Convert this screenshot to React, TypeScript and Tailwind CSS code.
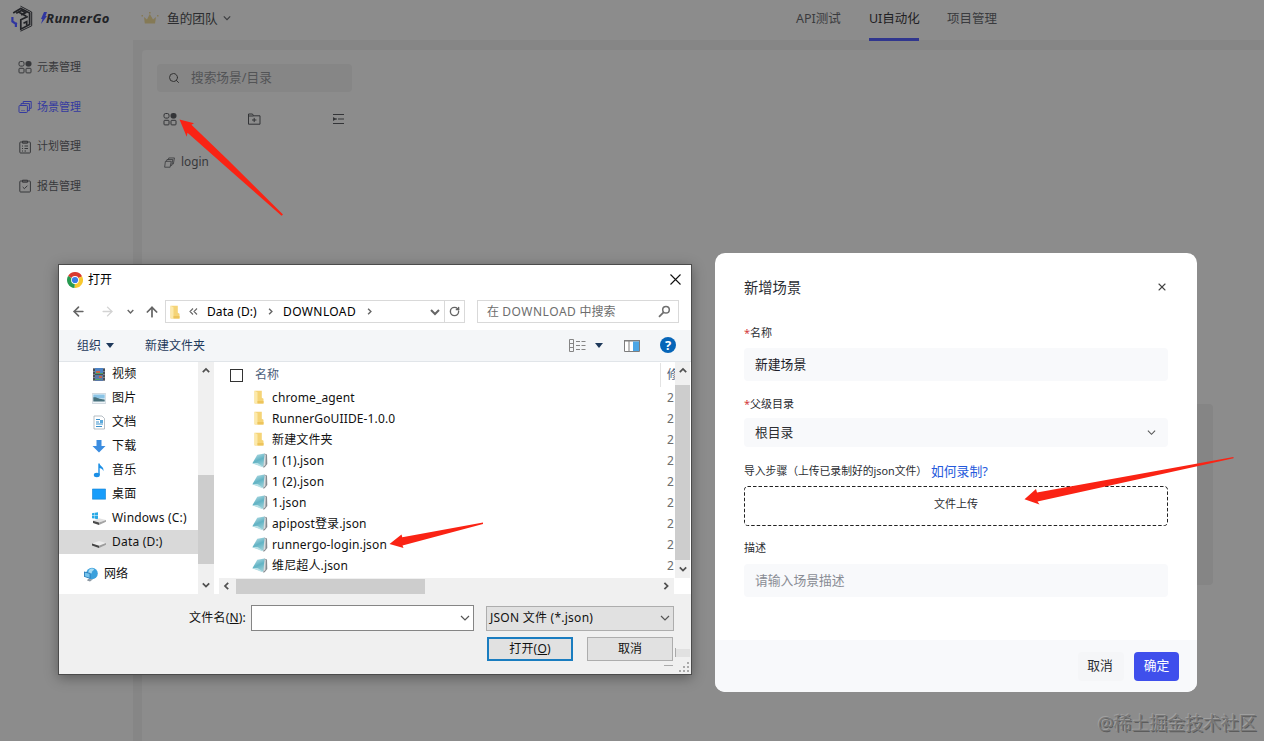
import type { ReactNode } from "react";
import { ArrowLeft, ArrowRight, ArrowUp, RotateCw, Search, X } from "lucide-react";

const sideItems = [
  { label: "元素管理", icon: "grid" },
  { label: "场景管理", icon: "layers", active: true },
  { label: "计划管理", icon: "plan" },
  { label: "报告管理", icon: "report" },
];

const places = [
  { label: "视频", icon: "video" },
  { label: "图片", icon: "picture" },
  { label: "文档", icon: "document" },
  { label: "下载", icon: "download" },
  { label: "音乐", icon: "music" },
  { label: "桌面", icon: "desktop" },
  { label: "Windows (C:)", icon: "windows" },
  { label: "Data (D:)", icon: "drive", active: true },
];

const files = [
  { name: "chrome_agent", folder: true },
  { name: "RunnerGoUIIDE-1.0.0", folder: true },
  { name: "新建文件夹", folder: true },
  { name: "1 (1).json" },
  { name: "1 (2).json" },
  { name: "1.json" },
  { name: "apipost登录.json" },
  { name: "runnergo-login.json" },
  { name: "维尼超人.json" },
];

const chevronPaths = {
  up: "M1 6.5L5 2.5l4 4",
  down: "M1 3l4 4 4-4",
  left: "M6.5 1l-4 4 4 4",
  right: "M3 1l4 4-4 4",
};

function Chevron({ to, className = "h-[10px] w-[10px]", weight = 1.2 }: { to: keyof typeof chevronPaths; className?: string; weight?: number }) {
  return (
    <svg viewBox="0 0 10 10" className={`shrink-0 ${className}`} fill="none" stroke="currentColor" strokeWidth={weight}>
      <path d={chevronPaths[to]} />
    </svg>
  );
}

function LineIcon({ name, className }: { name: string; className?: string }) {
  const paths: Record<string, ReactNode> = {
    grid: (
      <>
        <rect x="1" y="1.5" width="5" height="4.6" rx="1.6" />
        <rect x="8" y="1.5" width="5" height="4.6" rx="1.6" fill="currentColor" />
        <rect x="1" y="8.3" width="5" height="4.6" rx="0.8" />
        <rect x="8" y="8.3" width="5" height="4.6" rx="0.8" />
      </>
    ),
    layers: (
      <>
        <rect x="1" y="5.5" width="8.4" height="7" rx="0.8" />
        <path d="M3 5.5V3.6h8.4v7H9.4M5.2 3.6V1.5h8v6.8h-1.8" />
        <path d="M3 10.5h4" opacity=".5" />
      </>
    ),
    plan: (
      <>
        <rect x="1.8" y="2" width="10.6" height="11" rx="0.8" />
        <path d="M4.5 1.2h5v2h-5zM4 6h1M6.5 6H10M4 8.5h1M6.5 8.5H10M4 11h1M6.5 11H8" />
      </>
    ),
    report: (
      <>
        <rect x="1.8" y="2" width="10.6" height="11" rx="0.8" />
        <path d="M4.5 1.2h5v2h-5zM4.7 8l1.7 1.7 3-3" />
      </>
    ),
    folder: <path d="M1.5 2h4l1 1.8h6.5v8.4H1.5zM1.5 4h5M7.2 5.9v4.2M5 8h4.4" />,
    indent: (
      <>
        <path d="M2 2.5h11M7 7h6M2 11.5h11" />
        <path d="M2 5l3.2 2L2 9z" fill="currentColor" stroke="none" />
        <path d="M4 7h2" />
      </>
    ),
    copy: (
      <>
        <path d="M1.8 5.5h7.4L7.8 13H.8z" />
        <path d="M3.2 5.5l.6-2.3h7.4l-1.4 7.6H8.4M5.6 3.2l.5-2h7.2l-1.4 7.6h-1.7" />
      </>
    ),
  };
  return (
    <svg viewBox="0 0 14 14" className={className} fill="none" stroke="currentColor" strokeWidth="1">
      {paths[name]}
    </svg>
  );
}

function PlaceIcon({ name }: { name: string }) {
  const art: Record<string, ReactNode> = {
    video: (
      <>
        <path fill="#4b4f57" d="M1 1h12v13H1z" />
        <path fill="#4c83c4" d="M3 1h8v6H3z" />
        <path fill="#5a79a8" d="M3 8h8v6H3z" />
        <path fill="#c6664a" d="M4 4h4v2H4zM7 9h3v2H7z" />
        <path fill="#4fa067" d="M3 6h8v1H3zM3 12h6v1H3z" />
        <path stroke="#b9bcc2" strokeDasharray="1 2" d="M2 1v13M12 1v13" />
      </>
    ),
    picture: (
      <>
        <path fill="#eef4f8" stroke="#b7c3cc" strokeWidth=".6" d="M.3 2.5h13.4v10H.3z" />
        <path fill="#8bc4e6" d="M1.3 3.5h11.4v4H1.3z" />
        <path fill="#47717d" d="M1.3 6.5c3-1 5 2 11.4 2v2H1.3z" />
      </>
    ),
    document: (
      <>
        <path fill="#fff" stroke="#9aa3ad" strokeWidth=".7" d="M2 1h8l2.5 2.5V14H2z" />
        <path stroke="#3b91cc" d="M4 4.5h4M4 7h3M4 9h7M4 11.5h6" />
        <path fill="#5aa9dc" d="M8 5h3v3H8z" />
      </>
    ),
    download: <path fill="#3c8de0" d="M4.5 1h5v6h4L7 13.5.5 7h4z" />,
    music: (
      <>
        <ellipse cx="4.8" cy="12" rx="3" ry="2.2" fill="#1b8fe6" />
        <path fill="#1b8fe6" d="M6.3.5h1.4c0 3 4.8 3 3.6 7.8-.4-2-1.8-2.7-3.6-3.2V12H6.3z" />
      </>
    ),
    desktop: <path fill="#189dfb" stroke="#1482d0" strokeWidth=".6" d="M.4 2h13.2v10.2H.4z" />,
    windows: (
      <>
        <path fill="#29a9e6" d="M0 2.2l2.6-.4v2.7H0zM3 1.7l3-.5v3.3H3zM0 5h2.6v2.6L0 7.2zM3 5h3v3.2l-3-.5z" />
        <path fill="#e2e2e2" d="M1 9.8l6-2.6 7 1.8-7 2.5z" />
        <path fill="#4c4c4c" d="M1 9.8l6 1.7V14l-6-2z" />
        <path fill="#a5a5a5" d="M7 11.5L14 9v1.8L7 14z" />
      </>
    ),
    drive: (
      <>
        <path fill="#ececec" d="M0 8.5L7 6l7 2-7 2.7z" />
        <path fill="#454545" d="M0 8.5l7 2.2V13l-7-2.4z" />
        <path fill="#9c9c9c" d="M7 10.7L14 8v1.8L7 13z" />
      </>
    ),
    network: (
      <>
        <circle cx="8" cy="6.5" r="5.8" fill="#3ba0dc" />
        <path fill="#a7dcf4" d="M5 3c2-2 4-1.5 5-1 0 2-3 2-2 4-1 1-3 1-4 0z" />
        <path fill="#287bb8" d="M0 4.5L6.5 6v6L0 9.8z" />
        <path fill="#75c3ec" d="M.8 5.6l4.8 1.1v4L.8 9.2z" />
        <path fill="#8c98a2" d="M4 12l5 .3-3 2.2-3-1z" />
      </>
    ),
  };
  return <svg viewBox="0 0 14 15" className="h-[15px] w-[14px] shrink-0" fill="none">{art[name]}</svg>;
}

function FolderIcon() {
  return (
    <svg viewBox="0 0 10 14" className="h-[14px] w-[10px]">
      <path fill="#f5d477" d="M.5.8h7.3v7l1.7 1v4.7H.5z" />
      <path fill="#fce9ab" d="M.5.8l3 1.5v11.2l-3-.5z" />
      <path fill="#edc45c" d="M3.5 11h6v2.5h-6z" />
    </svg>
  );
}

function FileIcon() {
  return (
    <svg viewBox="0 0 16 15" className="h-[15px] w-4">
      <defs>
        <linearGradient id="page" x1="0" y1="0" x2="0.4" y2="1">
          <stop offset="0" stopColor="#c3e4ea" />
          <stop offset="0.6" stopColor="#62b3c4" />
          <stop offset="1" stopColor="#8fcbd5" />
        </linearGradient>
      </defs>
      <path fill="#85898e" d="M12.2.6l2.8.9.3 9.5-2.6 3.2-1.7.3z" />
      <path fill="#d9dddf" d="M12.3.9l1.5.8-.4 10.3-2.2 2.1z" />
      <path fill="url(#page)" d="M5.3 1.7L12.6.6l-1 9.9-.5 3.2L.4 10.2z" />
      <path fill="#b8e0e6" d="M.4 10.2l5.3-.3 5.4 3.8-.9.5z" />
    </svg>
  );
}

function Logo() {
  return (
    <svg viewBox="0 0 22 27" className="h-[27px] w-[22px]" fill="none" stroke="#222327">
      <path strokeWidth="1" d="M9.5 1.2L20.7 7v13.8L9.5 26.2" />
      <path strokeWidth="1.7" d="M2.2 8l7.6-4.6L18.6 8v11.6l-8.8 4.6V14.8l7-3.4" />
      <path strokeWidth="1.7" d="M5.2 8.2l5.4-2.7 4 2.2-4.4 2.4M8 7.3l7.3 4M12.5 18.2l3.2-1.5v3.5" />
      <path stroke="#3036a0" strokeWidth="2.2" d="M1.4 12v4.5l4.4 3M4.9 17.5v4.5" />
    </svg>
  );
}

function ChromeIcon() {
  return (
    <svg viewBox="0 0 16 16" className="h-4 w-4">
      <path fill="#d93a2f" d="M8 8L1.1 4A8 8 0 0 1 15 4.2z" />
      <path fill="#f8c82e" d="M8 8l7-3.8A8 8 0 0 1 7.5 16z" />
      <path fill="#279a50" d="M8 8l-.5 8A8 8 0 0 1 1.1 4z" />
      <path fill="#d93a2f" d="M8 4.3h7L14.5 4 8 1z" />
      <circle cx="8" cy="8" r="3.9" fill="#fff" />
      <circle cx="8" cy="8" r="3.1" fill="#3a7de8" />
    </svg>
  );
}

function TopBar() {
  return (
    <header className="flex h-10 items-start text-[12.5px] leading-[18px] text-[#3a3b3e]">
      <div className="ml-[11px] mt-[5px]"><Logo /></div>
      <div className="ml-2 mt-[9px] flex w-[70px] items-center text-[#222327]">
        <svg viewBox="0 0 6 12" className="h-3 w-[6px] shrink-0"><path fill="#3036a0" d="M3 0h3L4.5 4H6L0 12l1.5-5H0z" /></svg>
        <span className="-ml-px font-['Noto_Sans'] text-[13px] font-bold italic leading-[18px] tracking-[0.35px]">RunnerGo</span>
      </div>
      <svg viewBox="0 0 18 14" className="ml-[30px] mt-[11px] h-[14px] w-[18px]">
        <path fill="#857a56" d="M3.8 12.5L3 6l3 2.5L8.8 3l3.2 5.5L15 6l-1 6.5z" />
        <path fill="#857a56" d="M.5 4H2v1.5H.5zM8 1h1.6v1.6H8zM16 4h1.5v1.5H16z" />
      </svg>
      <div className="ml-2 mt-[9px] flex items-center gap-[5px]">
        <span className="text-[12.7px] text-[#2b2c2f]">鱼的团队</span>
        <Chevron to="down" className="h-2 w-2" weight={1.4} />
      </div>
      <nav className="ml-auto mr-[267px] flex h-10 pt-[10px]">
        <span className="w-[73px]">API测试</span>
        <span className="relative w-[78px] text-[#1f2023]">
          UI自动化
          <i className="absolute left-0 top-[28px] z-10 h-[3px] w-[50px] bg-[#30368e]" />
        </span>
        <span>项目管理</span>
      </nav>
    </header>
  );
}

function Sidebar() {
  return (
    <aside className="w-[133px] shrink-0 pl-[18px] pt-[17px]">
      {sideItems.map((item) => (
        <div key={item.label} className={`mb-[19.8px] flex h-5 items-center gap-[5px] text-[11px] ${item.active ? "text-[#343aa0]" : "text-[#37383b]"}`}>
          <LineIcon name={item.icon} className="h-[14px] w-[14px]" />
          {item.label}
        </div>
      ))}
    </aside>
  );
}

function ScenePanel() {
  return (
    <main className="ml-[9px] mt-[10px] flex-1 rounded-tl bg-[#8c8c8c] pl-[15px] pt-[14px]">
      <div className="flex h-7 w-[195px] items-center rounded bg-[#868686] pl-[11px] text-[12.7px] text-[#535456]">
        <Search className="mr-[11px] h-3 w-3 text-[#333]" strokeWidth={2} />
        搜索场景/目录
      </div>
      <div className="ml-[6px] mt-5 flex gap-[70px] text-[#333437]">
        <LineIcon name="grid" className="h-[14px] w-[14px]" />
        <LineIcon name="folder" className="h-[14px] w-[14px]" />
        <LineIcon name="indent" className="h-[14px] w-[14px]" />
      </div>
      <div className="ml-[7px] mt-[26px] flex h-5 items-center gap-[6px] font-['Noto_Sans'] text-[11.8px] text-[#37383b]">
        <LineIcon name="copy" className="h-[11px] w-[11px]" />
        login
      </div>
    </main>
  );
}

function AddressRow() {
  return (
    <div className="mt-[5px] flex h-[23px] items-center text-[#656565]">
      <ArrowLeft className="ml-3 h-[15px] w-[15px]" strokeWidth={2.6} />
      <ArrowRight className="ml-[14px] h-[15px] w-[15px] text-[#d3d3d3]" strokeWidth={2.2} />
      <Chevron to="down" className="ml-3 h-[7px] w-[7px]" weight={2} />
      <ArrowUp className="ml-[10px] h-4 w-4" strokeWidth={2.6} />
      <div className="ml-[5px] flex h-[23px] w-[300px] items-center border border-[#d9d9d9]">
        <span className="ml-1 mr-[9px]"><FolderIcon /></span>
        <svg viewBox="0 0 9 7" className="h-[7px] w-[9px]" fill="none" stroke="#666" strokeWidth="1.1"><path d="M4 .5l-3 3 3 3M8 .5l-3 3 3 3" /></svg>
        <span className="ml-[9px] w-[60px] tracking-[0.1px] text-black">Data (D:)</span>
        <Chevron to="right" className="h-[7px] w-[7px]" weight={2} />
        <span className="ml-[9px] w-[83px] tracking-[0.4px] text-black">DOWNLOAD</span>
        <Chevron to="right" className="h-[7px] w-[7px]" weight={2} />
        <Chevron to="down" className="ml-auto mr-1 h-[10px] w-[10px]" weight={2} />
        <div className="flex h-full w-5 items-center justify-center border-l border-[#d9d9d9]">
          <RotateCw className="h-[11px] w-[11px]" strokeWidth={3} />
        </div>
      </div>
      <div className="ml-3 flex h-[23px] w-[202px] items-center justify-between border border-[#d9d9d9] pl-[9px] pr-[7px] text-[#6d6d6d]">
        <span>在 <span className="tracking-[0.55px]">DOWNLOAD</span> 中搜索</span>
        <svg viewBox="0 0 13 13" className="h-[13px] w-[13px]" fill="none" stroke="#6f6f6f">
          <circle cx="8" cy="4.8" r="3.3" strokeWidth="1.5" />
          <path strokeWidth="1.8" d="M5.5 7.3L1 11.8" />
        </svg>
      </div>
    </div>
  );
}

function Toolbar() {
  return (
    <div className="mt-[7px] flex h-8 items-center border-b border-[#e1e5e9] bg-[#f4f6f8] pl-[18px] text-[#1e395b]">
      组织
      <svg viewBox="0 0 8 5" className="ml-[5px] h-[5px] w-2"><path fill="#1e395b" d="M0 0h8L4 5z" /></svg>
      <span className="ml-[31px]">新建文件夹</span>
      <svg viewBox="0 0 17 13" className="ml-auto h-[13px] w-[17px]" fill="none" stroke="#858585">
        <path d="M.5.5h4v12h-4zM.5 4.5h4M.5 8.5h4" />
        <path strokeDasharray="4 1.5" d="M7 2.5h10M7 6.5h10M7 10.5h10" />
      </svg>
      <svg viewBox="0 0 8 5" className="ml-[9px] h-[5px] w-2"><path fill="#1e395b" d="M0 0h8L4 5z" /></svg>
      <svg viewBox="0 0 16 12" className="ml-[21px] h-3 w-4">
        <path fill="#fff" stroke="#7d7d7d" d="M.5.5h15v11H.5z" />
        <path fill="#7d7d7d" d="M0 0h16v1.5H0zM4.5 1h1v10h-1z" />
        <path fill="#4ba6e6" d="M9 1.5h6V11H9z" />
      </svg>
      <span className="mb-px ml-5 mr-[15px] flex h-4 w-4 items-center justify-center rounded-full bg-[#0665b8] text-[13px] font-bold leading-4 text-white">?</span>
    </div>
  );
}

function PlacesPane() {
  return (
    <div className="flex w-[155px] shrink-0">
      <div className="w-[139px]">
        {places.map((place) => (
          <div key={place.label} className={`flex h-6 items-center gap-[6px] pl-[33px] ${place.active ? "bg-[#d9d9d9]" : ""}`}>
            <PlaceIcon name={place.icon} />
            <span className="whitespace-nowrap tracking-[0.2px]">{place.label}</span>
          </div>
        ))}
        <div className="mt-2 flex h-6 items-center gap-[6px] pl-[25px]">
          <PlaceIcon name="network" />
          网络
        </div>
      </div>
      <div className="flex w-4 flex-col items-center bg-[#f0f0f0] text-[#505050]">
        <Chevron to="up" className="mt-[5px] h-2 w-2" weight={2.2} />
        <div className="mt-[100px] h-[89px] w-full bg-[#cdcdcd]" />
        <Chevron to="down" className="mb-[5px] mt-auto h-2 w-2" weight={2.2} />
      </div>
    </div>
  );
}

function FilePane() {
  return (
    <div className="ml-[5px] flex min-w-0 flex-1 flex-col">
      <div className="flex h-[216px]">
        <div className="min-w-0 flex-1 overflow-hidden">
          <div className="flex h-[25px] items-center pt-px">
            <span className="ml-[11px] h-[13px] w-[13px] border border-[#333]" />
            <span className="ml-3 text-[#4c607a]">名称</span>
            <span className="ml-auto flex h-full w-[15px] items-center overflow-hidden whitespace-nowrap border-l border-[#e3e3e3] pl-[6px] text-[#4c607a]">修</span>
          </div>
          {files.map((file) => (
            <div key={file.name} className="flex h-[21px] items-center">
              <span className="ml-[32px] flex w-[20px] justify-center pb-px">{file.folder ? <span className="-ml-1"><FolderIcon /></span> : <span className="-ml-[2px]"><FileIcon /></span>}</span>
              <span className="ml-px whitespace-nowrap tracking-[0.14px]">{file.name}</span>
              <span className="ml-auto w-2 text-[#6d6d6d]">2</span>
            </div>
          ))}
        </div>
        <div className="mr-px flex w-[15px] flex-col items-center bg-[#f0f0f0] text-[#505050]">
          <Chevron to="up" className="mt-[5px] h-2 w-2" weight={2.2} />
          <div className="mt-[10px] h-[175px] w-full bg-[#cdcdcd]" />
          <Chevron to="down" className="mb-[5px] mt-auto h-2 w-2" weight={2.2} />
        </div>
      </div>
      <div className="mr-[17px] flex h-4 items-center bg-[#f0f0f0] text-[#505050]">
        <Chevron to="left" className="ml-[4px] h-2 w-2" weight={2.2} />
        <div className="ml-[5px] h-[15px] w-[189px] bg-[#cdcdcd]" />
        <Chevron to="right" className="ml-auto mr-[4px] h-2 w-2" weight={2.2} />
      </div>
    </div>
  );
}

function OpenDialog() {
  return (
    <section className="absolute left-[58px] top-[264px] flex h-[411px] w-[634px] flex-col border border-[#4b4b4b] bg-white text-xs leading-[18px] text-[#111] shadow-[0_3px_12px_rgba(0,0,0,0.35)]">
      <div className="flex h-[30px] items-center pb-px pl-2 pr-[10px]">
        <ChromeIcon />
        <span className="ml-[5px] text-black">打开</span>
        <svg viewBox="0 0 11 11" className="ml-auto h-[11px] w-[11px]" stroke="#111" strokeWidth="1.1"><path d="M.5.5l10 10M10.5.5l-10 10" /></svg>
      </div>
      <AddressRow />
      <Toolbar />
      <div className="flex h-[232px]">
        <PlacesPane />
        <FilePane />
      </div>
      <div className="relative flex-1 bg-[#f0f0f0] pt-[11px]">
        <div className="flex h-[26px] items-center">
          <span className="w-[187px] text-right tracking-[0.2px]">文件名(<u>N</u>):</span>
          <div className="ml-[5px] flex h-[26px] w-[223px] items-center justify-end border border-[#858585] bg-white pr-[3px]">
            <Chevron to="down" className="h-[10px] w-[10px] text-[#555]" />
          </div>
          <div className="ml-3 flex h-[25px] w-[188px] items-center justify-between border border-[#adadad] bg-[#e1e1e1] pl-[3px] pr-[3px]">
            <span className="tracking-[0.25px]">JSON 文件 (*.json)</span>
            <Chevron to="down" className="h-[10px] w-[10px] text-[#555]" />
          </div>
        </div>
        <div className="mt-[6px] flex pl-[428px]">
          <button className="h-6 w-[86px] border-2 border-[#1a7dc0] bg-[#e1e1e1] leading-5 tracking-[0.2px]">打开(<u>O</u>)</button>
          <button className="ml-[14px] h-6 w-[86px] border border-[#adadad] bg-[#e1e1e1] leading-5">取消</button>
        </div>
        <svg viewBox="0 0 28 28" className="absolute bottom-px right-0 h-7 w-7">
          <path fill="#e1e1e1" d="M13 4h14v8H13z" />
          <path fill="#aaa" d="M12 3h1v9h-1zM1 20h9v1H1zM24 17h2v2h-2zM20 21h2v2h-2zM24 21h2v2h-2zM16 25h2v2h-2zM20 25h2v2h-2zM24 25h2v2h-2z" />
        </svg>
      </div>
    </section>
  );
}

function SceneModal() {
  return (
    <section className="absolute left-[715px] top-[253px] flex h-[439px] w-[482px] flex-col overflow-hidden rounded-[10px] bg-white text-[11px] leading-4 text-[#2c2e33]">
      <div className="flex h-[387px] flex-col px-[29px] pt-[25px]">
        <div className="flex h-5 items-center justify-between text-[14.3px]">
          新增场景
          <X className="mb-[3px] h-3 w-3 text-[#444]" strokeWidth={2.2} />
        </div>
        <label className="mt-[27px]"><span className="text-[#d33c3c]">*</span>名称</label>
        <div className="mt-[7px] flex h-[33px] items-center rounded-sm bg-[#f8f9fb] pb-[2px] pl-[11px] text-[12.8px] text-[#1b1c28]">新建场景</div>
        <label className="mt-[15px]"><span className="text-[#d33c3c]">*</span>父级目录</label>
        <div className="mt-[6px] flex h-[29px] items-center justify-between rounded-sm bg-[#f8f9fb] pb-px pl-[11px] pr-[12px] text-[12.8px]">
          根目录
          <Chevron to="down" className="h-[9px] w-[9px] text-[#555]" />
        </div>
        <div className="mt-4 flex h-4 items-center whitespace-nowrap">
          <span className="w-[187px] text-[10.8px]">导入步骤（上传已录制好的json文件）</span>
          <span className="text-[12.8px] text-[#2459dc]">如何录制?</span>
        </div>
        <div className="relative mt-[7px] h-10 pt-[10px] text-center">
          <svg className="absolute left-0 top-0 h-10 w-[424px]" fill="none">
            <rect x=".5" y=".5" width="423" height="39" rx="3" stroke="#222" strokeDasharray="3.5 2" />
          </svg>
          文件上传
        </div>
        <label className="mt-[14px]">描述</label>
        <div className="mt-2 flex h-[33px] items-center rounded-sm bg-[#f8f9fb] pb-[2px] pl-[11px] text-[12.8px] text-[#898c94]">请输入场景描述</div>
      </div>
      <footer className="flex flex-1 justify-end bg-[#f8f9fb] pr-[18px] pt-3 text-[12.8px]">
        <button className="h-[29px] w-[46px] rounded bg-[#f5f6f8] pb-1 pr-[2px]">取消</button>
        <button className="ml-[10px] h-[29px] w-[45px] rounded bg-[#3f4fec] pb-1 text-white">确定</button>
      </footer>
    </section>
  );
}

export default function App() {
  return (
    <div className="relative flex h-[741px] w-[1264px] flex-col overflow-hidden bg-[#8c8c8c] font-['Noto_Sans','Noto_Sans_CJK_SC',sans-serif]">
      <TopBar />
      <div className="flex flex-1">
        <Sidebar />
        <div className="flex flex-1 bg-[#868686]"><ScenePanel /></div>
      </div>
      <div className="absolute left-[1180px] top-[404px] h-[181px] w-[33px] rounded bg-[#858585]" />
      <OpenDialog />
      <SceneModal />
      {/* red pointer arrows */}
      <svg className="pointer-events-none absolute left-0 top-0 h-[741px] w-[1264px]" fill="#fa2314">
        <path d="M179.5 119.5l14.5 3.8-2.6 1.4 36.1 34.8 55.5 55-1.5 1.3-59-52-35-31-.8 4z" />
        <path d="M389.5 544l12-9.5.8 2.8L483 522.5v1.5l-80.5 21.5 1 2.5z" />
        <path d="M1024.5 499.3l11.5-10.3 1 3.5L1233.5 457v1.3L1037.5 501.5l2 3z" />
      </svg>
      <div className="absolute bottom-1 right-[7px] whitespace-nowrap text-[17.9px] leading-7 text-[#777] [text-shadow:-1px_-1px_0_#a0a0a0,1px_1px_0_#5c5c5c]">@稀土掘金技术社区</div>
    </div>
  );
}
